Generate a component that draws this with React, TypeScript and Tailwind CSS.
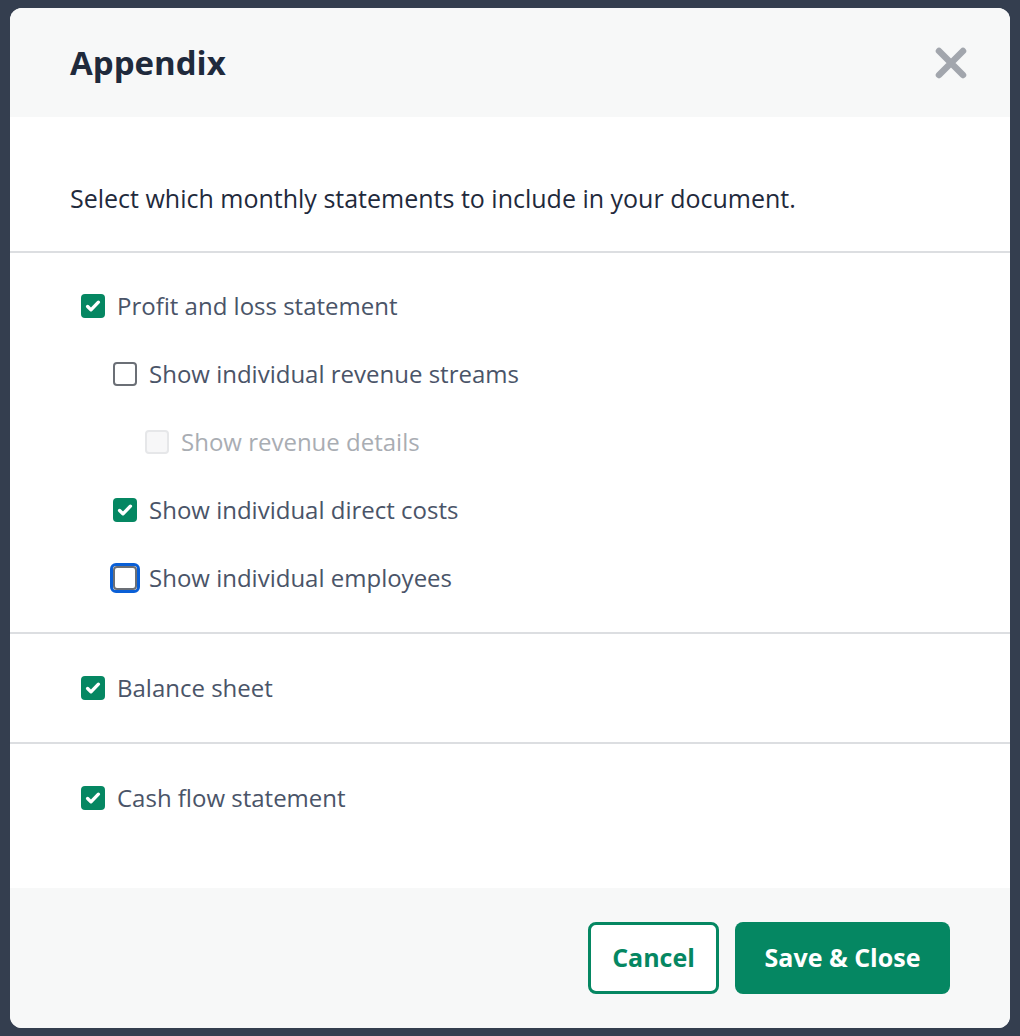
const font = { fontFamily: '"Open Sans", Lato, sans-serif' };

type Item = { label: string; checked: boolean; level: number; disabled?: boolean; focused?: boolean };

function Check({ checked, disabled, focused }: { checked: boolean; disabled?: boolean; focused?: boolean }) {
  const box = checked ? (
    <span className="flex h-6 w-6 items-center justify-center rounded-[4px] bg-[#058762]">
      <svg width="18" height="18" viewBox="0 0 16 16" fill="none">
        <path d="M3.2 8.4l3 3L12.8 4.6" stroke="white" strokeWidth="3" strokeLinecap="round" strokeLinejoin="round" />
      </svg>
    </span>
  ) : (
    <span
      className={`block h-6 w-6 rounded-[4px] border-2 ${disabled ? 'border-[#e6e7e9] bg-[#f7f7f8]' : 'border-[#6b6f76] bg-white'}`}
    />
  );
  if (focused) {
    return <span className="-m-[3px] rounded-[6px] border-[3px] border-[#0a5fd6]">{box}</span>;
  }
  return box;
}

function Row({ item }: { item: Item }) {
  const indent = ['pl-[71px]', 'pl-[103px]', 'pl-[135px]'][item.level];
  return (
    <label className={`flex h-[68px] items-center gap-3 ${indent} pr-10`}>
      <Check checked={item.checked} disabled={item.disabled} focused={item.focused} />
      <span className={`text-[24px] ${item.disabled ? 'text-[#a9adb3]' : 'text-[#4a5468]'}`}>{item.label}</span>
    </label>
  );
}

export default function App() {
  const pl: Item[] = [
    { label: 'Profit and loss statement', checked: true, level: 0 },
    { label: 'Show individual revenue streams', checked: false, level: 1 },
    { label: 'Show revenue details', checked: false, level: 2, disabled: true },
    { label: 'Show individual direct costs', checked: true, level: 1 },
    { label: 'Show individual employees', checked: false, level: 1, focused: true },
  ];
  return (
    <div className="min-h-[1036px] bg-[#343e4f] px-[10px] pt-[8px]" style={font}>
      <div className="w-[1000px] overflow-hidden rounded-[12px] bg-white">
        <div className="flex h-[109px] items-center justify-between bg-[#f7f8f8] pl-[60px] pr-[42px]">
          <h1 className="text-[33px] font-bold text-[#1f2a3c]">Appendix</h1>
          <svg width="34" height="34" viewBox="0 0 34 34">
            <path d="M5 5L29 29M29 5L5 29" stroke="#a2a6ad" strokeWidth="6.5" strokeLinecap="round" />
          </svg>
        </div>
        <div className="flex h-[136px] items-center px-[60px] pt-[50px] pb-[20px] border-b-2 border-[#dcdee1]">
          <p className="text-[25px] text-[#1f2a3c]">Select which monthly statements to include in your document.</p>
        </div>
        <div className="border-b-2 border-[#dcdee1] pt-[19px] pb-[20px]">
          {pl.map((i) => (
            <Row key={i.label} item={i} />
          ))}
        </div>
        <div className="border-b-2 border-[#dcdee1] py-[20px]">
          <Row item={{ label: 'Balance sheet', checked: true, level: 0 }} />
        </div>
        <div className="pt-[20px] pb-[56px]">
          <Row item={{ label: 'Cash flow statement', checked: true, level: 0 }} />
        </div>
        <div className="flex h-[140px] items-start justify-end gap-4 bg-[#f7f8f8] pr-[60px] pt-[34px]">
          <button className="h-[72px] w-[131px] rounded-[8px] border-[3px] border-[#058762] bg-white text-[25px] font-bold text-[#058762]">
            Cancel
          </button>
          <button className="h-[72px] w-[215px] rounded-[8px] bg-[#058762] text-[25px] font-bold text-white">
            Save &amp; Close
          </button>
        </div>
      </div>
    </div>
  );
}
